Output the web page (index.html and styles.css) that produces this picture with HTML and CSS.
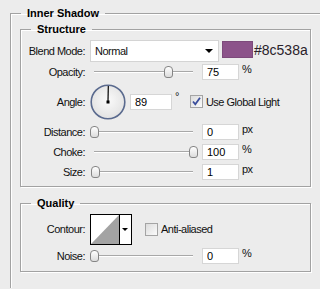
FILE: index.html
```html
<!DOCTYPE html>
<html lang="en">
<head>
    <meta charset="UTF-8">
    <title>Inner Shadow</title>
    <link rel="stylesheet" href="styles.css">
</head>
<body>

    <fieldset class="group outer">
        <legend>Inner Shadow</legend>

        <fieldset class="group section structure">
            <legend>Structure</legend>

            <div class="row row-blend">
                <label class="label">Blend Mode:</label>
                <div class="select">
                    <span>Normal</span>
                    <span class="arrow"></span>
                </div>
                <span class="swatch"></span>
                <span class="hex">#8c538a</span>
            </div>

            <div class="row row-slider">
                <label class="label">Opacity:</label>
                <div class="slider"><div class="track"><span class="thumb" style="left: 75%"></span></div></div>
                <input class="num" type="text" value="75">
                <span class="unit">%</span>
            </div>

            <div class="row row-angle">
                <label class="label">Angle:</label>
                <svg class="dial" width="36" height="36" viewBox="0 0 36 36">
                    <defs>
                        <radialGradient id="dialFill" cx="50%" cy="45%" r="55%">
                            <stop offset="0" stop-color="#fafafa"/>
                            <stop offset="1" stop-color="#e2e2e2"/>
                        </radialGradient>
                    </defs>
                    <circle cx="18" cy="18" r="16.8" fill="url(#dialFill)" stroke="#5a6a8e" stroke-width="1.6"/>
                    <line x1="18" y1="18" x2="18.3" y2="2" stroke="#000" stroke-width="1.2"/>
                    <rect x="16.5" y="16.5" width="3" height="3" fill="#000"/>
                </svg>
                <input class="num num-angle" type="text" value="89">
                <span class="deg">°</span>
                <span class="check checked">
                    <svg width="11" height="11" viewBox="0 0 11 11"><path d="M2 5.5 L4.3 8.3 L9 1.8" fill="none" stroke="#3a4d9c" stroke-width="1.8"/></svg>
                </span>
                <span class="check-label">Use Global Light</span>
            </div>

            <div class="row row-slider">
                <label class="label">Distance:</label>
                <div class="slider"><div class="track"><span class="thumb" style="left: 0%"></span></div></div>
                <input class="num" type="text" value="0">
                <span class="unit">px</span>
            </div>

            <div class="row row-slider">
                <label class="label">Choke:</label>
                <div class="slider"><div class="track"><span class="thumb" style="left: 100%"></span></div></div>
                <input class="num" type="text" value="100">
                <span class="unit">%</span>
            </div>

            <div class="row row-slider">
                <label class="label">Size:</label>
                <div class="slider"><div class="track"><span class="thumb" style="left: 1%"></span></div></div>
                <input class="num" type="text" value="1">
                <span class="unit">px</span>
            </div>
        </fieldset>

        <fieldset class="group section quality">
            <legend>Quality</legend>

            <div class="row row-contour">
                <label class="label">Contour:</label>
                <svg class="contour" width="42" height="31" viewBox="0 0 42 31">
                    <rect x="0.5" y="0.5" width="41" height="30" fill="#fff" stroke="#000"/>
                    <polygon points="1,30 29,1 29,30" fill="#a3a3a3"/>
                    <line x1="29.5" y1="0" x2="29.5" y2="31" stroke="#000"/>
                    <polygon points="32,14 38,14 35,17" fill="#000"/>
                </svg>
                <span class="check"></span>
                <span class="check-label">Anti-aliased</span>
            </div>

            <div class="row row-slider">
                <label class="label">Noise:</label>
                <div class="slider"><div class="track"><span class="thumb" style="left: 0%"></span></div></div>
                <input class="num" type="text" value="0">
                <span class="unit">%</span>
            </div>
        </fieldset>
    </fieldset>

</body>
</html>
```

FILE: styles.css
```css
body {
    margin: 0;
    background-color: #ececec;
    font-family: 'Liberation Sans', Arial, sans-serif;
    font-size: 11px;
    color: #111;
    overflow: hidden;
}

/* etched group boxes */
.group {
    margin: 0;
    border: 1px solid #a2a2a2;
    box-shadow: 1px 1px 0 #fff, inset 1px 1px 0 #fff;
    box-sizing: border-box;
}

.group legend {
    padding: 0 6px;
    font-weight: bold;
    line-height: 13px;
    color: #000;
}

/* the outer box runs off the right and bottom edges */
.outer {
    width: 310px;
    margin: 7px 0 0 10px;
    padding: 3px 0 16px 9px;
    border-right: 0;
    border-bottom: 0;
    box-shadow: inset 1px 1px 0 #fff;
}

.outer > legend {
    margin-left: 1px;
}

.section {
    width: 291px;
    padding: 4px 0 4px 6px;
}

.section > legend {
    margin-left: 4px;
}

.quality {
    margin-top: 10px;
    padding-top: 2px;
    padding-bottom: 5px;
}

.row {
    display: flex;
    align-items: center;
    height: 20px;
    letter-spacing: -0.5px;
}

.row-blend {
    height: 22px;
    align-items: stretch;
}

.row-blend + .row-slider {
    height: 19px;
}

.row-angle {
    height: 41px;
}

.row-contour {
    height: 34px;
}

.label {
    width: 58px;
    margin-right: 5px;
    text-align: right;
    white-space: nowrap;
    flex-shrink: 0;
}

.row-blend .label {
    align-self: center;
}

.select {
    width: 129px;
    box-sizing: border-box;
    display: flex;
    align-items: center;
    justify-content: space-between;
    padding: 0 5px 0 4px;
    background-color: #fff;
    border: 1px solid #d4d4d4;
}

.arrow {
    width: 0;
    height: 0;
    border-left: 4px solid transparent;
    border-right: 4px solid transparent;
    border-top: 4px solid #000;
}

.swatch {
    width: 31px;
    height: 17px;
    margin: 1px 0 0 3px;
    box-sizing: border-box;
    background-color: #8c538a;
    border: 1px solid #7d4a7b;
}

.hex {
    align-self: center;
    margin: -2px 0 0 1px;
    font-size: 14px;
    letter-spacing: 0;
    color: #2a222a;
}

/* sliders */
.slider {
    width: 108px;
    height: 14px;
    padding: 0 5px 0 4px;
    box-sizing: border-box;
}

.track {
    position: relative;
    height: 2px;
    margin-top: 6px;
    border-top: 1px solid #a8a8a8;
    border-bottom: 1px solid #fff;
    box-sizing: border-box;
}

.thumb {
    position: absolute;
    top: -6px;
    width: 9px;
    height: 12px;
    margin-left: -4px;
    box-sizing: border-box;
    border: 1px solid #858585;
    border-radius: 4px 4px 3px 3px;
    background: linear-gradient(#ffffff, #dcdcdc);
}

.num {
    width: 37px;
    height: 16px;
    margin: 0 0 0 4px;
    padding: 0 0 0 4px;
    box-sizing: border-box;
    border: 1px solid #d6d6d6;
    background-color: #fff;
    font-family: inherit;
    font-size: 11px;
    letter-spacing: 0;
    color: #000;
    outline: none;
}

.unit {
    margin-left: 3px;
    align-self: flex-start;
    margin-top: 1px;
}

.dial {
    flex-shrink: 0;
}

.num-angle {
    width: 42px;
    margin-left: 4px;
}

.deg {
    align-self: flex-start;
    margin: 9px 0 0 3px;
}

.check {
    width: 13px;
    height: 13px;
    margin-left: 11px;
    box-sizing: border-box;
    display: flex;
    align-items: center;
    justify-content: center;
    border: 1px solid #a4a4a4;
    background: linear-gradient(135deg, #dcdcdc, #fbfbfb);
}

.check-label {
    margin-left: 3px;
    white-space: nowrap;
}

.contour {
    margin-left: 0;
    flex-shrink: 0;
}

.row-contour .check {
    margin-left: 13px;
}
```
